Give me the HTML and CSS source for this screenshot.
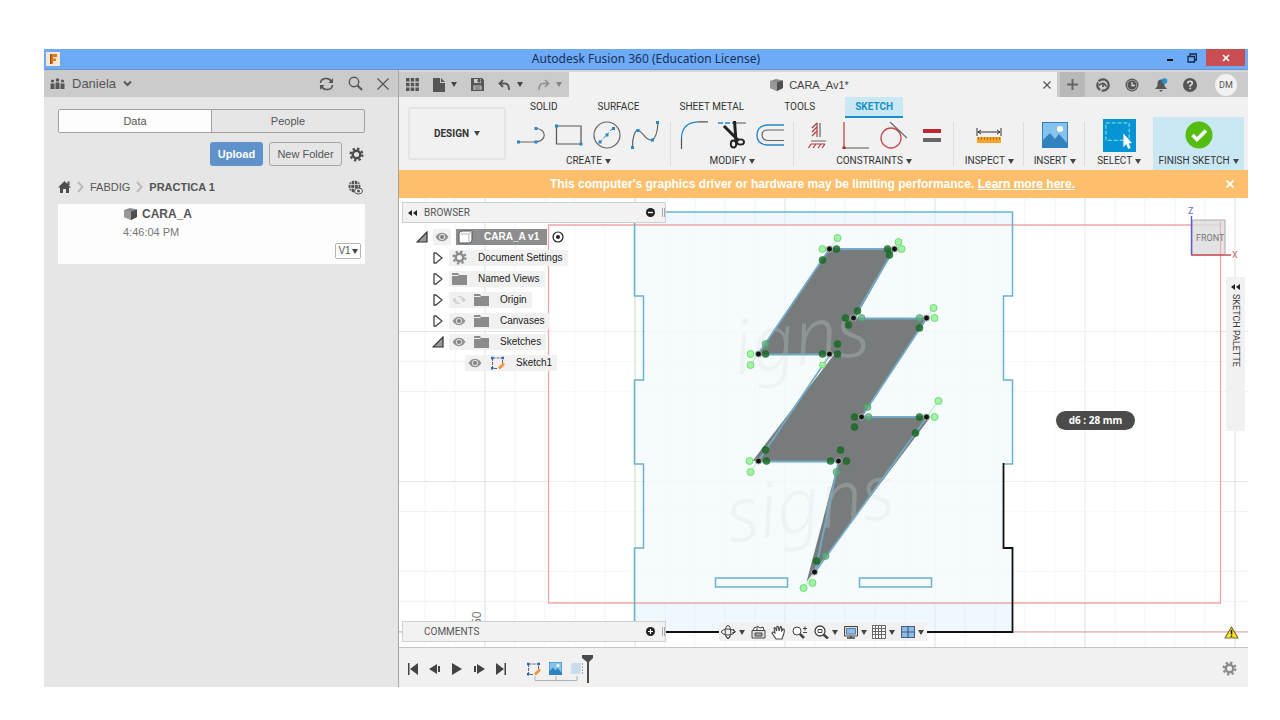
FILE: index.html
```html
<!DOCTYPE html>
<html lang="en">
<head>
<meta charset="utf-8">
<title>Autodesk Fusion 360 (Education License)</title>
<link rel="stylesheet" href="styles.css">
</head>
<body>
<svg class="defs" width="0" height="0" aria-hidden="true">
  <symbol id="eye" viewBox="0 0 14 10"><path d="M0.5 5C3 1.500 5 .8 7 .8S11 1.500 13.500 5C11 8.500 9 9.200 7 9.200S3 8.500.5 5Z" fill="#929292"/><circle cx="7" cy="5" r="3" fill="#e4e4e4"/><circle cx="7" cy="5" r="2" fill="#808080"/></symbol>
  <symbol id="folder" viewBox="0 0 15 12"><path d="M0 0H6L7 2H15V12H0Z" fill="#8b8b8b"/><path d="M0 2.500H6.500" stroke="#f1f1f1"/></symbol>
  <symbol id="cube" viewBox="0 0 15 14"><path d="M1 3 7 1 14 2.500V10L8 13 1 10Z" fill="#8a8a8a"/><path d="M1 3 8 4.500V13L1 10Z" fill="#999"/><path d="M8 4.500 14 2.500V10L8 13Z" fill="#4f4f4f"/></symbol>
  <symbol id="gear" viewBox="0 0 16 16"><circle cx="8" cy="8" r="4" fill="none" stroke="currentColor" stroke-width="2.600"/><circle cx="8" cy="8" r="6.300" fill="none" stroke="currentColor" stroke-width="2.400" stroke-dasharray="2.470 2.470"/></symbol>
  <symbol id="open" viewBox="0 0 12 12"><path d="M11 1V11H1Z" fill="#999" stroke="#333" stroke-width="1.200"/></symbol>
  <symbol id="closed" viewBox="0 0 12 12"><path d="M2 1H4L10 6 4 11H2Z" fill="#fff" stroke="#444" stroke-width="1.300" stroke-linejoin="round"/></symbol>
  <symbol id="sketch" viewBox="0 0 15 14"><path d="M2.500 2H12.500V8M2.500 2V12.500H8" fill="none" stroke="#5d6b78" stroke-dasharray="3 1"/><path d="M1 .8h2.500v2.500H1zM11.500.8H14v2.500h-2.500zM1 11h2.500v2.500H1z" fill="#2b62ad"/><path d="M14 7.500 9 12.500" stroke="#f09438" stroke-width="2.600"/></symbol>
  <symbol id="photo" viewBox="0 0 26 26"><path d="M0 0H26V26H0Z" fill="#3182bf"/><path d="M1 1H25V21L17 12 13 17 8 11 1 18Z" fill="#85c3ee"/><circle cx="18" cy="7" r="3" fill="#fffce2"/></symbol>
</svg>

<div class="window">
  <header class="titlebar">
    <svg class="app-logo" viewBox="0 0 14 14"><path d="M0 0H14V14H0Z" fill="#fbe6d3"/><path d="M4 2H11V5H7V6.500H10V9H7V12H4Z" fill="#e07b25"/><path d="M4 2H5.500V12H4Z" fill="#a84e12"/></svg>
    <h1 class="title">Autodesk Fusion 360 (Education License)</h1>
    <div class="window-buttons">
      <button aria-label="Minimize"><svg width="10" height="10"><path d="M2 7H8" stroke="#111" stroke-width="2"/></svg></button>
      <button aria-label="Restore"><svg width="10" height="10"><path d="M1 3.500H7.500V9H1ZM3 3V1H9.500V7H8" fill="none" stroke="#152848" stroke-width="1.300"/></svg></button>
      <button class="close" aria-label="Close"><svg width="8" height="8"><path d="M1 1 7 7M7 1 1 7" stroke="#fff" stroke-width="1.600"/></svg></button>
    </div>
  </header>

  <div class="main">
    <aside class="data-panel">
      <div class="data-header">
        <button class="team">
          <svg width="15" height="12" fill="#555"><circle cx="2.500" cy="3" r="1.600"/><circle cx="7.500" cy="2" r="1.800"/><circle cx="12.500" cy="3" r="1.600"/><path d="M.5 5.500H4.500V11H.5ZM5.500 4.500H9.500V11H5.500ZM10.500 5.500H14.500V11H10.500Z"/></svg>
          <span>Daniela</span>
          <svg width="9" height="7"><path d="M1 1.500 4.500 5 8 1.500" fill="none" stroke="#555" stroke-width="2"/></svg>
        </button>
        <div class="data-actions">
          <button aria-label="Refresh"><svg width="15" height="14" fill="none" stroke="#555" stroke-width="1.600"><path d="M1.500 6C2 0.500 10 0 12.500 4.500M13.500 8C13 13.500 5 14 2.500 9.500"/><path d="M14 1V6H9.500ZM1 13V8H5.500Z" fill="#555" stroke="none"/></svg></button>
          <button aria-label="Search"><svg width="15" height="15" fill="none" stroke="#555"><circle cx="6" cy="6" r="4.700" stroke-width="1.400"/><path d="M9.500 9.500 14 14" stroke-width="2"/></svg></button>
          <button aria-label="Close panel"><svg width="12" height="12"><path d="M.5.5 11.500 11.500M11.500.5.5 11.500" stroke="#555" stroke-width="1.200"/></svg></button>
        </div>
      </div>
      <div class="data-body">
        <div class="segmented"><button class="active">Data</button><button>People</button></div>
        <div class="panel-tools">
          <button class="upload">Upload</button>
          <button class="new-folder">New Folder</button>
          <button class="plain" aria-label="Settings"><svg class="dark" width="15" height="15"><use href="#gear"/></svg></button>
        </div>
        <nav class="breadcrumb">
          <a href="#" aria-label="Home"><svg width="13" height="12"><path d="M0 6.500 6.500 0 13 6.500H11V12H8V8H5V12H2V6.500ZM9.500.5H11.500V4H9.500Z" fill="#4d4d4d"/></svg></a>
          <svg width="7" height="12"><path d="M1 1 5.500 6 1 11" fill="none" stroke="#bbb" stroke-width="2"/></svg>
          <a href="#">FABDIG</a>
          <svg width="7" height="12"><path d="M1 1 5.500 6 1 11" fill="none" stroke="#bbb" stroke-width="2"/></svg>
          <a href="#" class="current">PRACTICA 1</a>
          <button class="plain globe" aria-label="Public link"><svg width="15" height="15"><circle cx="6.500" cy="6.500" r="6" fill="#555"/><path d="M0 4.500H13M0 8.500H13M6.500 0V13M3.500 1Q2 6.500 3.500 12M9.500 1Q11 6.500 9.500 12" fill="none" stroke="#ddd" stroke-width=".8"/><ellipse cx="10.500" cy="11" rx="4" ry="3" fill="#eee" stroke="#555"/><circle cx="10.500" cy="11" r="1.500" fill="#555"/></svg></button>
        </nav>
        <article class="file-card">
          <h2 class="file-name"><svg width="15" height="14"><use href="#cube"/></svg>CARA_A</h2>
          <p class="file-time">4:46:04 PM</p>
          <button class="version">V1<i class="caret"></i></button>
        </article>
      </div>
    </aside>

    <section class="workspace">
      <div class="topbar">
        <div class="quick">
          <button aria-label="Data panel"><svg width="13" height="13" fill="#555"><path d="M0 0h3.500v3.500H0zM4.700 0h3.500v3.500H4.700zM9.400 0h3.500v3.500H9.400zM0 4.700h3.500v3.500H0zM4.700 4.700h3.500v3.500H4.700zM9.400 4.700h3.500v3.500H9.400zM0 9.400h3.500v3.500H0zM4.700 9.400h3.500v3.500H4.700zM9.400 9.400h3.500v3.500H9.400z"/></svg></button>
          <button aria-label="File"><svg width="12" height="14"><path d="M0 0H7V5H12V14H0ZM8 0 12 4H8Z" fill="#555"/></svg><i class="caret"></i></button>
          <button aria-label="Save"><svg width="13" height="13"><path d="M0 0H11L13 2V13H0Z" fill="#555"/><path d="M3 1H10V5H3ZM2.500 7.500H10.500V12H2.500Z" fill="#cbcbcb"/><path d="M7 1.500H9V4H7ZM3.500 9H9.500M3.500 11H9.500" fill="#555" stroke="#555"/></svg></button>
          <button aria-label="Undo"><svg width="13" height="12"><path d="M5 1 1.500 4.500 5 8M2 4.500H7Q11 4.500 11 11" fill="none" stroke="#555" stroke-width="1.800"/></svg><i class="caret"></i></button>
          <button class="faded" aria-label="Redo"><svg width="13" height="12"><path d="M8 1 11.500 4.500 8 8M11 4.500H6Q2 4.500 2 11" fill="none" stroke="#555" stroke-width="1.600"/></svg><i class="caret"></i></button>
        </div>
        <div class="doc-tab">
          <span class="doc-title"><svg width="15" height="14"><use href="#cube"/></svg>CARA_Av1*</span>
          <button aria-label="Close document"><svg width="8" height="8"><path d="M.5.5 7.500 7.500M7.500.5.5 7.500" stroke="#555" stroke-width="1.200"/></svg></button>
        </div>
        <button class="new-tab" aria-label="New tab"><svg width="11" height="11"><path d="M5.500 0V11M0 5.500H11" stroke="#666" stroke-width="2"/></svg></button>
        <div class="account">
          <button aria-label="Extensions"><svg width="14" height="14"><circle cx="7" cy="7" r="5.700" fill="none" stroke="#555" stroke-width="2.300"/><path d="M1 3 5 5.500" stroke="#cbcbcb" stroke-width="1.300"/><path d="M3 7.500Q5 4.500 8 5.500L10.500 8.500M7 5.500V9" fill="none" stroke="#555" stroke-width="1.700"/><path d="M4 14 6 10" stroke="#cbcbcb" stroke-width="1.500"/></svg></button>
          <button aria-label="Job status"><svg width="14" height="14"><circle cx="7" cy="7" r="6.500" fill="#555"/><circle cx="7" cy="7" r="5.200" fill="#b9b9b9"/><circle cx="7" cy="7" r="4.500" fill="#555"/><path d="M7 4V7.500H10" fill="none" stroke="#ddd" stroke-width="1.300"/></svg></button>
          <button aria-label="Notifications"><svg width="14" height="14"><path d="M1 11 3.500 8V5Q4 1.500 7 1.500T10.500 5V8L13 11ZM5 12H9L7 14Z" fill="#555"/><circle cx="10.500" cy="3" r="2.800" fill="#2391cf"/></svg></button>
          <button aria-label="Help"><svg width="14" height="14"><circle cx="7" cy="7" r="7" fill="#555"/><path d="M4.700 5.500Q4.700 3.200 7 3.200T9.300 5.200Q9.300 6.200 7.200 7.500V8.700M7.200 9.700V11.200" fill="none" stroke="#ddd" stroke-width="1.600"/></svg></button>
          <button class="avatar">DM</button>
        </div>
      </div>

      <div class="ribbon">
        <button class="design">DESIGN<i class="caret"></i></button>
        <div class="ribbon-body">
          <nav class="ribbon-tabs"><button>SOLID</button><button>SURFACE</button><button>SHEET METAL</button><button>TOOLS</button><button class="active">SKETCH</button></nav>
          <div class="tool-groups">
            <div class="group create">
              <div class="icons">
                <button aria-label="Line"><svg viewBox="0 0 28 28"><path d="M1 21H19M19 21C30 20 30 8 19 7.500" fill="none" stroke="#666" stroke-width="1.200"/><path d="M0 19.500h3v3H0zM17.500 19.500h3v3h-3zM17.500 6h3v3h-3z" fill="#2787cc"/></svg></button>
                <button aria-label="Rectangle"><svg viewBox="0 0 28 28"><path d="M1.500 5H26V23H1.500Z" fill="none" stroke="#555" stroke-width="1.200"/><path d="M0 3.500h3v3H0zM24.500 21.500h3v3h-3z" fill="#2787cc"/></svg></button>
                <button aria-label="Circle"><svg viewBox="0 0 28 28"><circle cx="14" cy="14" r="13" fill="none" stroke="#666" stroke-width="1.200"/><path d="M7 21 20 7" stroke="#2787cc" stroke-dasharray="3 2"/><path d="M5.500 19.500h3v3h-3zM12.500 12.500h3v3h-3zM19 6h3v3h-3z" fill="#2787cc"/></svg></button>
                <button aria-label="Spline"><svg viewBox="0 0 28 28"><path d="M1.500 27C1 17 4 9 7 9.500C12 10 14 20 21 19Q26 17 27 2" fill="none" stroke="#666" stroke-width="1.200"/><path d="M0 25h3v3H0zM5.500 8h3v3h-3zM20 17.500h3v3h-3zM25 0h3v3h-3z" fill="#2787cc"/></svg></button>
              </div>
              <button class="menu">CREATE<i class="caret"></i></button>
            </div>
            <div class="group modify">
              <div class="icons">
                <button aria-label="Fillet"><svg viewBox="0 0 28 28"><path d="M1.500 28V17M18 .8H28" stroke="#555" stroke-width="1.200"/><path d="M1.500 17Q2 1.500 18 .8" fill="none" stroke="#2787cc" stroke-width="1.300"/></svg></button>
                <button aria-label="Trim"><svg viewBox="0 0 28 28"><path d="M0 2H16" stroke="#2787cc" stroke-width="1.300" stroke-dasharray="5 2"/><path d="M18 2H28" stroke="#555"/><path d="M6 5 20 19M16.500 0 18 20" stroke="#222" stroke-width="3"/><ellipse cx="15.500" cy="23" rx="2.700" ry="3.500" fill="none" stroke="#222" stroke-width="1.900"/><ellipse cx="22.500" cy="21" rx="3.500" ry="2.600" fill="none" stroke="#222" stroke-width="1.900"/></svg></button>
                <button aria-label="Offset"><svg viewBox="0 0 28 28"><path d="M28 4H11Q1 5 1 14T11 24H28" fill="none" stroke="#2787cc" stroke-width="1.400"/><path d="M28 9H12Q6 9 6 14T12 19.500H28" fill="none" stroke="#666" stroke-width="1.200"/></svg></button>
              </div>
              <button class="menu">MODIFY<i class="caret"></i></button>
            </div>
            <div class="group constraints">
              <div class="icons">
                <button aria-label="Horizontal vertical"><svg viewBox="0 0 28 28" stroke="#b63c3d" stroke-width="1.200" fill="none"><path d="M14 2V16"/><path d="M14 2 9 7M14 6 9 11M14 10 9 15M8 23 5.500 27M13 23 10 27M18 23 15 27M22 23 19 27M8 23H22"/><path d="M17 2V16M8 20H23" stroke="#666"/></svg></button>
                <button aria-label="Perpendicular"><svg viewBox="0 0 28 28"><path d="M3 1V26" stroke="#b63c3d" stroke-width="1.200"/><path d="M3 27H28" stroke="#555"/><path d="M1.500 25.500h3v3h-3z" fill="#a22"/></svg></button>
                <button aria-label="Tangent"><svg viewBox="0 0 28 28"><circle cx="12" cy="17" r="10" fill="none" stroke="#c54b4c" stroke-width="1.300"/><path d="M11 1 28 17" stroke="#666" stroke-width="1.200"/></svg></button>
                <button aria-label="Equal"><svg viewBox="0 0 28 28"><path d="M6 10H24" stroke="#bd292c" stroke-width="4"/><path d="M6 19H24" stroke="#666" stroke-width="4"/></svg></button>
              </div>
              <button class="menu">CONSTRAINTS<i class="caret"></i></button>
            </div>
            <div class="group inspect">
              <div class="icons"><button aria-label="Measure"><svg viewBox="0 0 28 28"><path d="M2 7V15M26 7V15M3 11H25M6 9 3 11 6 13M22 9 25 11 22 13" fill="none" stroke="#333"/><path d="M2 16H26V22H2Z" fill="#f5a329"/><path d="M3 17.500H25" stroke="#98600e" stroke-width="2" stroke-dasharray="1 2"/></svg></button></div>
              <button class="menu">INSPECT<i class="caret"></i></button>
            </div>
            <div class="group insert">
              <div class="icons"><button aria-label="Insert image"><svg class="medium"><use href="#photo"/></svg></button></div>
              <button class="menu">INSERT<i class="caret"></i></button>
            </div>
            <div class="group select">
              <div class="icons"><button class="large" aria-label="Select"><svg viewBox="0 0 34 34"><path d="M0 0H34V34H0Z" fill="#0794d7"/><path d="M3 4H27V22H3Z" fill="none" stroke="#74d9c8" stroke-width="1.300" stroke-dasharray="4 2"/><path d="M21 15V29L24 26 26 31 28.500 30 26.500 25H30Z" fill="#fff"/></svg></button></div>
              <button class="menu">SELECT<i class="caret"></i></button>
            </div>
            <div class="group finish">
              <div class="icons"><button aria-label="Finish sketch"><svg viewBox="0 0 28 28"><circle cx="14" cy="14" r="13.500" fill="#55bd11"/><path d="M7.500 14 12 18.500 21 9.500" fill="none" stroke="#fff" stroke-width="3.600"/></svg></button></div>
              <button class="menu">FINISH SKETCH<i class="caret"></i></button>
            </div>
          </div>
        </div>
      </div>

      <div class="banner">
        <p>This computer's graphics driver or hardware may be limiting performance. <a href="#">Learn more here.</a></p>
        <button aria-label="Dismiss"><svg width="8" height="8"><path d="M.5.5 7.500 7.500M7.500.5.5 7.500" stroke="#fff" stroke-width="1.800"/></svg></button>
      </div>

      <div class="canvas">
        <svg class="drawing" viewBox="398 198 850 449" preserveAspectRatio="xMidYMid slice">
          <defs>
            <pattern id="minor" x="634" y="631" width="30" height="30" patternUnits="userSpaceOnUse"><path d="M.5 0V30M0 .5H30" stroke="#f3f3f3"/></pattern>
            <pattern id="major" x="634" y="631" width="150" height="150" patternUnits="userSpaceOnUse"><path d="M.5 0V150M0 .5H150" stroke="#e4e4e4"/></pattern>
            <clipPath id="plate"><path d="M634 212H1012V296H1003V380H1012V464H1003V548H1012V632H634V548H643V464H634V380H643V296H634Z"/></clipPath>
            <clipPath id="bolt"><path d="M829 249H894L855 318H927L861 417H930L814 571 806 582 838 461H752L834 354H757Z"/></clipPath>
          </defs>
          <path d="M398 198H1248V647H398Z" fill="url(#minor)"/>
          <path d="M398 198H1248V647H398Z" fill="url(#major)"/>
          <path d="M548 225H1220V603H548Z" fill="#fff" opacity=".4"/>
          <g clip-path="url(#plate)"><path d="M634 212H1012V632H634Z" fill="#d9effd" opacity=".42"/><path d="M634 225H1012V603H634Z" fill="#fff" opacity=".45"/></g>
          <path d="M634.500 198V632" stroke="#cfe6cb"/>
          <path d="M398 632H1248" stroke="#e2a2a2" stroke-width="1.200"/>
          <g class="watermark" fill="#eff3f5"><text x="730" y="543" transform="rotate(-9 730 543)">signs</text><text x="737" y="375" transform="rotate(-9 737 375)">igns</text></g>
          <path d="M829 249H894L855 318H927L861 417H930L814 571 806 582 838 461H752L834 354H757Z" fill="#777b7c"/>
          <g clip-path="url(#bolt)"><g class="watermark" fill="#8e9394"><text x="730" y="543" transform="rotate(-9 730 543)">signs</text><text x="737" y="375" transform="rotate(-9 737 375)">igns</text></g></g>
          <path d="M548 225H1220V603H548Z" fill="none" stroke="#f0a5a8" stroke-width="1.300"/>
          <path d="M1003 464H1012V380H1003V296H1012V212H634V296H643V380H634V464H643V548H634V632M715 578H787V587H715ZM859 578H931V587H859Z" fill="none" stroke="#69b4cd" stroke-width="1.500"/>
          <path d="M1003 463V548H1012V632H634" fill="none" stroke="#111" stroke-width="1.800"/>
          <path d="M829 249H893.500L853 318.500H926L861 417H926.500L814.500 572 838 461.500H757.500L829.500 354.500H757.500Z" fill="none" stroke="#71abc6" stroke-width="1.800"/>
          <path d="M829 249 837 238M893 249 898 242M926 318 933 308M926 417 938 401M757 354 750 365M757 461 750 472M815 572 803 588M829 354 822 365" stroke="#b2e9b1"/>
          <g fill="#16681f" fill-opacity=".8" stroke="#0e6e20" stroke-opacity=".5"><circle cx="836" cy="249" r="3.500"/><circle cx="822" cy="260" r="3.500"/><circle cx="887" cy="249" r="3.500"/><circle cx="889" cy="255" r="3.500"/><circle cx="845" cy="318" r="3.500"/><circle cx="848" cy="325" r="3.500"/><circle cx="857" cy="311" r="3.500"/><circle cx="919" cy="328" r="3.500"/><circle cx="765" cy="354" r="3.500"/><circle cx="837" cy="344" r="3.500"/><circle cx="837" cy="354" r="3.500"/><circle cx="822" cy="354" r="3.500"/><circle cx="854" cy="417" r="3.500"/><circle cx="854" cy="427" r="3.500"/><circle cx="919" cy="417" r="3.500"/><circle cx="915" cy="433" r="3.500"/><circle cx="765" cy="450" r="3.500"/><circle cx="766" cy="461" r="3.500"/><circle cx="840" cy="450" r="3.500"/><circle cx="846" cy="461" r="3.500"/><circle cx="830" cy="461" r="3.500"/><circle cx="816" cy="561" r="3.500"/></g>
          <g fill="#5dac7c" fill-opacity=".75" stroke="#3e9e62" stroke-opacity=".6"><circle cx="861" cy="318" r="3.500"/><circle cx="919" cy="318" r="3.500"/><circle cx="765" cy="344" r="3.500"/><circle cx="867" cy="407" r="3.500"/><circle cx="868" cy="417" r="3.500"/><circle cx="836" cy="472" r="3.500"/><circle cx="825" cy="556" r="3.500"/></g>
          <g fill="#9af29b" fill-opacity=".9" stroke="#6fdc78"><circle cx="837" cy="238" r="3.500"/><circle cx="822" cy="249" r="3.500"/><circle cx="898" cy="242" r="3.500"/><circle cx="901" cy="249" r="3.500"/><circle cx="933" cy="308" r="3.500"/><circle cx="934" cy="318" r="3.500"/><circle cx="750" cy="354" r="3.500"/><circle cx="750" cy="365" r="3.500"/><circle cx="822" cy="365" r="3"/><circle cx="938" cy="401" r="3.500"/><circle cx="934" cy="417" r="3.500"/><circle cx="749" cy="461" r="3.500"/><circle cx="750" cy="472" r="3.500"/><circle cx="803" cy="588" r="3.500"/><circle cx="812" cy="583" r="3.500"/></g>
          <g fill="#111" stroke="#a9a9a9" stroke-width="1"><circle cx="829" cy="249" r="3"/><circle cx="894" cy="249" r="3"/><circle cx="853" cy="318" r="3"/><circle cx="926" cy="318" r="3"/><circle cx="829" cy="354" r="3"/><circle cx="758" cy="354" r="3"/><circle cx="861" cy="417" r="3"/><circle cx="926" cy="417" r="3"/><circle cx="838" cy="461" r="3"/><circle cx="758" cy="461" r="3"/><circle cx="814" cy="572" r="3"/></g>
          <text class="scale" x="480" y="625" transform="rotate(-90 480 625)">50</text>
        </svg>

        <div class="browser">
          <div class="dock-bar">
            <svg width="9" height="6"><path d="M4 0V6L0 3ZM9 0V6L5 3Z" fill="#222"/></svg>
            <span>BROWSER</span>
            <button aria-label="Collapse browser"><svg width="9" height="9"><circle cx="4.500" cy="4.500" r="4.500" fill="#222"/><path d="M2 4.500H7" stroke="#fff" stroke-width="1.400"/></svg></button>
            <i class="grip"></i>
          </div>
          <ul class="tree">
            <li class="level-0"><svg class="arrow"><use href="#open"/></svg><span class="node"><svg class="eye"><use href="#eye"/></svg></span><span class="node selected"><svg width="15" height="14"><path d="M1 4Q1 1 4 1H14V10Q14 13 11 13H1Z" fill="#fff" stroke="#555"/><path d="M1 4H11V13M11 4 14 1" fill="none" stroke="#bbb"/></svg>CARA_A v1</span><svg width="12" height="12"><circle cx="6" cy="6" r="5" fill="#fff" stroke="#222" stroke-width="1.200"/><circle cx="6" cy="6" r="2" fill="#222"/></svg></li>
            <li class="level-1"><svg class="arrow"><use href="#closed"/></svg><span class="node"><svg class="tree-gear"><use href="#gear"/></svg>Document Settings</span></li>
            <li class="level-1"><svg class="arrow"><use href="#closed"/></svg><span class="node"><svg class="folder"><use href="#folder"/></svg>Named Views</span></li>
            <li class="level-1"><svg class="arrow"><use href="#closed"/></svg><span class="node"><svg class="eye off"><use href="#eye"/><path d="M2 0 12 10" stroke="#f1f1f1" stroke-width="3"/></svg><svg class="folder"><use href="#folder"/></svg>Origin</span></li>
            <li class="level-1"><svg class="arrow"><use href="#closed"/></svg><span class="node"><svg class="eye"><use href="#eye"/></svg><svg class="folder"><use href="#folder"/></svg>Canvases</span></li>
            <li class="level-1"><svg class="arrow"><use href="#open"/></svg><span class="node"><svg class="eye"><use href="#eye"/></svg><svg class="folder"><use href="#folder"/></svg>Sketches</span></li>
            <li class="level-2"><span class="node"><svg class="eye"><use href="#eye"/></svg><svg width="15" height="14"><use href="#sketch"/></svg>Sketch1</span></li>
          </ul>
        </div>

        <div class="dock-bar comments">
          <span>COMMENTS</span>
          <button aria-label="Add comment"><svg width="9" height="9"><circle cx="4.500" cy="4.500" r="4.500" fill="#222"/><path d="M2 4.500H7M4.500 2V7" stroke="#fff" stroke-width="1.200"/></svg></button>
          <i class="grip"></i>
        </div>

        <div class="nav-bar">
          <button aria-label="Orbit"><svg width="15" height="14" fill="none" stroke="#444"><ellipse cx="7" cy="7" rx="6.500" ry="3"/><ellipse cx="7" cy="7" rx="2.800" ry="6.500"/><path d="M12 4 14.500 7 11 8M5 11 7 14 9 11"/></svg><i class="caret"></i></button>
          <button aria-label="Look at"><svg width="15" height="14"><path d="M1 5.500H14V13H1Z" fill="#e2e2e2" stroke="#444"/><path d="M4 8H11V11H4Z" fill="#aaa" stroke="#444"/><path d="M2 5 4 2 5 3M6 5V1L9 3M9 3 12 2 13 5" fill="none" stroke="#444"/></svg></button>
          <button aria-label="Pan"><svg width="15" height="15"><path d="M5 14 1 8Q1 6 4 8L3 3Q4 1 5.500 6L6 1.500Q7.500 0 8 6L9.500 1.500Q11 1 10.500 6.500L12 4Q14 3.500 13 8L11 14Z" fill="#fff" stroke="#444" stroke-width="1.100"/></svg></button>
          <button aria-label="Zoom"><svg width="16" height="14" fill="none" stroke="#444"><circle cx="5" cy="6" r="4" fill="#fff"/><path d="M8 9 12 13" stroke-width="2.500"/><path d="M11 3.500H15M13 1.500V5.500M11 7.500H15"/></svg></button>
          <button aria-label="Fit"><svg width="15" height="14" fill="none" stroke="#444"><circle cx="6" cy="6" r="5" fill="#fff" stroke-width="1.300"/><path d="M4 4.500H8V7.500H4Z"/><path d="M9.500 9.500 14 13.500" stroke-width="2.500"/></svg><i class="caret"></i></button>
          <button aria-label="Display settings"><svg width="14" height="13"><path d="M.5.5H13.500V10H.5Z" fill="#ddd" stroke="#444"/><path d="M2.500 2.500H11.500V8H2.500Z" fill="#8ebdea" stroke="#597fa5"/><path d="M3 12H11M7 10V12" stroke="#444" stroke-width="1.500"/></svg><i class="caret"></i></button>
          <button aria-label="Grid and snaps"><svg width="14" height="14"><path d="M.5.5H13.500V13.500H.5ZM3.500 0V14M6.500 0V14M9.500 0V14M.5 3.500H14M.5 6.500H14M.5 9.500H14" fill="#fff" stroke="#666"/></svg><i class="caret"></i></button>
          <button aria-label="Viewports"><svg width="14" height="12"><path d="M.5.5H13.500V11.500H.5ZM7 0V12M0 6H14" fill="#92bce9" stroke="#405f84" stroke-width="1.200"/></svg><i class="caret"></i></button>
        </div>

        <svg class="view-cube" viewBox="0 0 56 56" width="56" height="56">
          <path d="M6 15 7 14H39V48L38 49H6Z" fill="#dcdcde" fill-opacity=".8" stroke="#aaa"/>
          <path d="M34.500 16V48" stroke="#e8aeb2"/>
          <path d="M5.500 10V49" stroke="#5c58dd" stroke-width="1.400"/><path d="M5 49H45" stroke="#cf4c55" stroke-width="1.500"/>
          <text x="10" y="35" class="face">FRONT</text><text x="2" y="8" class="axis-z">Z</text><text x="46" y="52" class="axis-x">X</text>
        </svg>

        <button class="palette"><svg width="9" height="6"><path d="M4 0V6L0 3ZM9 0V6L5 3Z" fill="#222"/></svg><span>SKETCH PALETTE</span></button>
        <output class="dimension">d6 : 28 mm</output>
        <svg class="warning" width="15" height="13"><path d="M7.500 1 14 12H1Z" fill="#ffe52c" stroke="#77702b" stroke-width="1.200" stroke-linejoin="round"/><path d="M7.500 4V8.500M7.500 9.500V11" stroke="#222" stroke-width="1.600"/></svg>
      </div>

      <footer class="timeline">
        <div class="playback">
          <button aria-label="Go to start"><svg width="12" height="12" fill="#444"><path d="M1 0H2.500V12H1ZM11 0V12L3 6Z"/></svg></button>
          <button aria-label="Step back"><svg width="12" height="12" fill="#444"><path d="M8 1V11L0 6ZM9 3H11V9H9Z"/></svg></button>
          <button aria-label="Play"><svg width="12" height="12" fill="#444"><path d="M1 0 11 6 1 12Z"/></svg></button>
          <button aria-label="Step forward"><svg width="12" height="12" fill="#444"><path d="M4 1V11L12 6ZM1 3H3V9H1Z"/></svg></button>
          <button aria-label="Go to end"><svg width="12" height="12" fill="#444"><path d="M9.500 0H11V12H9.500ZM1 0V12L9 6Z"/></svg></button>
        </div>
        <div class="features">
          <button aria-label="Sketch feature"><svg width="15" height="14"><use href="#sketch"/></svg></button>
          <button aria-label="Canvas feature"><svg width="13" height="13"><use href="#photo"/></svg></button>
          <button aria-label="Extrude feature"><svg width="14" height="13"><path d="M1 3 3 1H11V10L9 12H1Z" fill="#c9dcec"/><path d="M12.500 1V12" stroke="#aaa" stroke-dasharray="2 1"/></svg></button>
          <svg class="bracket" width="44" height="6"><path d="M1 0V4.500H43V0M22 0V4.500" fill="none" stroke="#b0b0b0"/></svg>
        </div>
        <svg class="marker" width="11" height="28"><path d="M0 0H11V3L7 7V28H5V7L0 3Z" fill="#4a4a4a"/></svg>
        <button class="timeline-gear" aria-label="Timeline settings"><svg width="15" height="15"><use href="#gear"/></svg></button>
      </footer>
    </section>
  </div>
</div>
</body>
</html>
```
FILE: styles.css
```css
* { box-sizing: border-box; }
body {
  margin: 0;
  min-height: 100vh;
  padding: 49px 32px 33px 44px;
  display: flex;
  background: #fff;
  color: #444;
  font: 12px/16px "Liberation Sans", Arial, sans-serif;
}
h1, h2, p, ul { margin: 0; padding: 0; }
button {
  margin: 0; padding: 0; border: 0; background: none;
  color: inherit; font: inherit;
  display: flex; align-items: center; justify-content: center;
}
svg { flex: none; display: block; }
a { color: inherit; text-decoration: none; }
.defs { position: absolute; }
.caret {
  flex: none; width: 0; height: 0;
  border: 3px solid transparent; border-top: 5px solid #444; border-bottom: 0;
}
.window { flex: 1; min-width: 0; display: flex; flex-direction: column; }

.titlebar {
  height: 21px; display: grid; grid-template-columns: 1fr auto 1fr; align-items: center;
  background: #6dabf7; border-bottom: 1px solid #6c96cb;
}
.app-logo { width: 14px; height: 14px; margin-left: 2px; }
.title { font: 12px/20px "Noto Sans", sans-serif; color: #17305a; }
.window-buttons { display: flex; justify-content: flex-end; align-self: stretch; padding-right: 3px; }
.window-buttons button { width: 22px; height: 18px; }
.window-buttons .close { width: 39px; height: 17px; margin-left: 3px; background: #c84e51; }

.main { flex: 1; display: flex; min-height: 0; }
.data-panel { flex: none; width: 355px; background: #e6e6e6; border-right: 1px solid #a5a5a5; }
.data-header {
  height: 27px; padding: 0 9px 0 6px; display: flex; align-items: center; justify-content: space-between;
  background: #cbcbcb;
}
.team { gap: 7px; font-size: 13px; color: #555; }
.data-actions { display: flex; gap: 14px; }
.data-body { padding: 12px 33px 0 14px; }
.segmented { display: flex; height: 24px; border: 1px solid #a0a0a0; border-radius: 2px; font-size: 11px; }
.segmented button { flex: 1; color: #555; }
.segmented .active { background: #fdfdfd; border-right: 1px solid #a0a0a0; }
.panel-tools { display: flex; justify-content: flex-end; align-items: center; gap: 6px; margin-top: 9px; font-size: 11px; }
.panel-tools .upload, .panel-tools .new-folder { height: 24px; border-radius: 3px; }
.upload { width: 53px; font-weight: bold; color: #fff; background: #5f92cb; }
.new-folder { width: 73px; border: 1px solid #a6a6a6; color: #555; }
.plain { width: 15px; margin: 0 2px 0 6px; }
.panel-tools .plain { margin: 0 1px; }
.dark { color: #4d4d4d; }
.breadcrumb { display: flex; align-items: center; gap: 6px; height: 16px; margin-top: 13px; color: #555; font-size: 11px; }
.breadcrumb .current { font-weight: bold; }
.breadcrumb .globe { margin-left: auto; }
.file-card { height: 60px; margin-top: 9px; padding: 2px 4px 0 65px; background: #fdfdfd; display: flex; flex-direction: column; }
.file-name { display: flex; align-items: center; gap: 4px; font-size: 12px; font-weight: bold; color: #555; }
.file-time { margin-top: 1px; font-size: 11px; line-height: 18px; color: #777; }
.version { align-self: flex-end; width: 26px; height: 16px; gap: 1px; margin-top: 2px; border: 1px solid #b5b5b5; border-radius: 2px; font-size: 10px; color: #555; }

.workspace { flex: 1; min-width: 0; display: flex; flex-direction: column; background: #f1f1f1; }
.topbar { height: 27px; display: flex; align-items: stretch; background: #cbcbcb; border-top: 2px solid #d5d5dc; }
.quick { width: 170px; display: flex; align-items: center; justify-content: space-between; padding: 0 7px; }
.quick button { gap: 6px; }
.faded { opacity: .5; }
.doc-tab { flex: 1; display: flex; align-items: center; padding-right: 6px; background: #f1f1f1; }
.doc-title { flex: 1; display: flex; align-items: center; justify-content: center; gap: 5px; padding-left: 6px; font-size: 11px; color: #444; }
.new-tab { width: 25px; margin-left: 3px; background: #b9b9b9; }
.account { display: flex; align-items: center; gap: 15px; padding: 0 11px; }
.avatar { width: 22px; height: 22px; margin-left: 3px; border-radius: 50%; background: #f1f1f1; font: 9px/12px Roboto, sans-serif; color: #555; }

.ribbon { height: 73px; display: flex; padding: 0 4px 0 9px; font: 10px/12px Roboto, sans-serif; color: #333; }
.design { flex: none; width: 98px; height: 53px; margin-top: 10px; gap: 5px; border: 2px solid #e4e4e4; border-radius: 3px; font-weight: bold; }
.ribbon-body { flex: 1; min-width: 0; display: flex; flex-direction: column; }
.ribbon-tabs { display: flex; gap: 20px; padding-left: 14px; height: 21px; }
.ribbon-tabs button { padding: 0 10px; border-bottom: 2px solid transparent; }
.ribbon-tabs .active { background: #c9e8f4; border-bottom-color: #1a8fc6; color: #1a8fc6; font-weight: bold; }
.tool-groups { flex: 1; display: flex; margin-top: -1px; }
.group { flex: 70 1 0; min-width: 0; display: flex; flex-direction: column; align-items: center; justify-content: space-between; padding: 3px 0; background: linear-gradient(#ddd, #ddd) right center / 1px 44px no-repeat; }
.create { flex-grow: 165; }
.modify { flex-grow: 123; }
.constraints { flex-grow: 161; }
.insert { flex-grow: 61; }
.select { flex-grow: 68; background: none; }
.finish { flex-grow: 91; background: #c9e8f4; }
.icons { display: flex; align-items: center; gap: 10px; height: 30px; }
.icons button, .icons svg { width: 28px; height: 28px; }
.icons .medium { width: 26px; height: 26px; }
.icons .large, .icons .large svg { width: 33px; height: 33px; }
.menu { gap: 3px; white-space: nowrap; }

.banner { height: 28px; display: flex; align-items: center; padding: 0 14px 0 0; background: #fdbf6c; color: #fff; font: bold 12px/16px "Liberation Sans", sans-serif; }
.banner p { flex: 1; text-align: center; }
.banner a { text-decoration: underline; }

.canvas { flex: 1; min-height: 449px; position: relative; overflow: hidden; background: #fff; }
.drawing { position: absolute; width: 100%; height: 100%; }
.watermark { font: italic 300 76px/80px "Noto Sans", sans-serif; }
.scale { font: 12px/14px "Liberation Sans", sans-serif; fill: #777; }
.browser { position: absolute; top: 4px; left: 3px; width: 264px; }
.dock-bar { height: 21px; display: flex; align-items: center; gap: 7px; padding: 0 0 0 5px; background: #f2f2f2; border: 1px solid #d0d0d0; font: 10px/12px Roboto, sans-serif; color: #555; }
.dock-bar span { flex: 1; }
.grip { width: 3px; height: 9px; border: 1px solid #aaa; border-width: 0 1px; }
.comments { position: absolute; bottom: 5px; left: 3px; width: 264px; padding-left: 21px; }
.tree { list-style: none; padding-top: 3px; font-size: 10px; color: #222; }
.tree li { height: 21px; display: flex; align-items: center; gap: 5px; }
.level-0 { padding-left: 14px; }
.level-1 { padding-left: 30px; }
.level-2 { padding-left: 63px; }
.arrow { width: 12px; height: 12px; }
.node { height: 16px; display: flex; align-items: center; gap: 11px; padding: 0 5px 0 3px; background: #f1f1f1; }
.level-0 .node { padding: 0 2px; }
.level-0 .selected { padding: 0 8px 0 2px; background: #8d8d8d; color: #fff; font-weight: bold; }
.eye { width: 14px; height: 10px; margin-right: -3px; }
.level-0 .eye { margin: 0; }
.off { opacity: .35; }
.folder { width: 15px; height: 12px; }
.tree-gear { width: 15px; height: 15px; color: #8b8b8b; }
.nav-bar { position: absolute; bottom: 6px; left: 320px; width: 208px; height: 18px; display: flex; align-items: center; justify-content: space-between; padding: 0 3px 0 2px; background: #f1f1f1; }
.nav-bar button { gap: 3px; }
.view-cube { position: absolute; top: 8px; right: 6px; }
.face { font: 9px/10px Roboto, sans-serif; fill: #777; }
.axis-z { font: 9px/10px Roboto, sans-serif; fill: #6a67dd; }
.axis-x { font: 9px/10px Roboto, sans-serif; fill: #d2606a; }
.palette { position: absolute; top: 79px; right: 3px; width: 19px; height: 154px; flex-direction: column; justify-content: flex-start; gap: 4px; padding-top: 7px; background: #f1f1f1; font: 9px/12px Roboto, sans-serif; color: #333; }
.palette span { writing-mode: vertical-rl; }
.dimension { position: absolute; top: 213px; right: 113px; width: 79px; height: 19px; border-radius: 10px; background: #4b4b4b; color: #fff; text-align: center; font: bold 10px/19px "Noto Sans", sans-serif; }
.warning { position: absolute; right: 9px; bottom: 8px; }

.timeline { height: 40px; display: flex; align-items: center; padding: 2px 11px 0 8px; background: #f1f1f1; border-top: 1px solid #c4c4c4; }
.playback { display: flex; gap: 10px; }
.features { position: relative; display: flex; gap: 8px; margin-left: 19px; }
.bracket { position: absolute; left: 8px; top: 14px; }
.marker { margin-left: -2px; }
.timeline-gear { margin-left: auto; color: #8b8b8b; }
```
